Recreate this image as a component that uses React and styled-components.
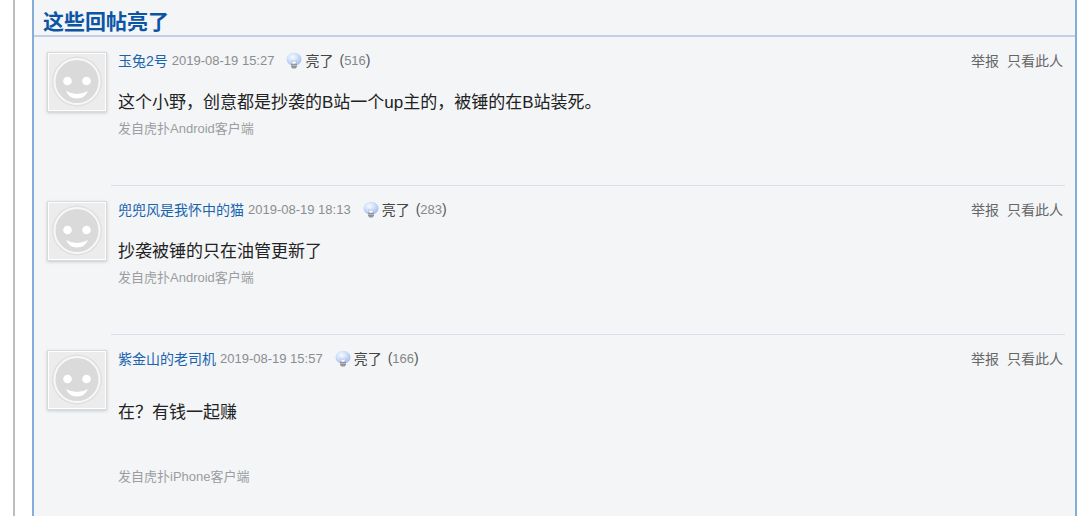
import React from "react";
import styled, { createGlobalStyle } from "styled-components";

const replies = [
  {
    id: 1,
    user: "玉兔2号",
    time: "2019-08-19 15:27",
    lights: 516,
    text: "这个小野，创意都是抄袭的B站一个up主的，被锤的在B站装死。",
    source: "发自虎扑Android客户端",
  },
  {
    id: 2,
    user: "兜兜风是我怀中的猫",
    time: "2019-08-19 18:13",
    lights: 283,
    text: "抄袭被锤的只在油管更新了",
    source: "发自虎扑Android客户端",
  },
  {
    id: 3,
    user: "紫金山的老司机",
    time: "2019-08-19 15:57",
    lights: 166,
    text: "在？有钱一起赚",
    source: "发自虎扑iPhone客户端",
    spaced: true,
  },
];

const GlobalStyle = createGlobalStyle`
  * {
    box-sizing: border-box;
  }
  body {
    margin: 0;
    background: #fff;
    color: #222;
    font-family: "Liberation Sans", "Noto Sans CJK SC", sans-serif;
  }
`;

const Page = styled.div`
  display: flex;
  min-height: 100vh;
  margin-left: 13px;
  padding: 0 3px 0 17px;
  border-left: 2px solid #bcbdbf;
`;

const Panel = styled.section`
  flex: 1;
  min-width: 0;
  background: #f3f5f7;
  border: solid #84add9;
  border-width: 0 2px;
`;

const Title = styled.h2`
  margin: 0;
  padding: 8px 9px 0;
  border-bottom: 2px solid #c3cfe4;
  color: #0b55a4;
  font-size: 21px;
  line-height: 27px;
`;

const Post = styled.article`
  display: flex;
  padding: 0 10px 0 13px;
`;

const Avatar = styled.a`
  flex: 0 0 60px;
  height: 60px;
  margin: 15px 4px 0 0;
  padding: 1px;
  background: #fff;
  border: 1px solid #d9dadc;
  box-shadow: 0 1px 3px rgba(0, 0, 0, 0.18);
  svg {
    display: block;
    width: 100%;
    height: 100%;
  }
`;

const PostBody = styled.div`
  flex: 1;
  min-width: 0;
  min-height: 149px;
  padding: 13px 0 0 7px;
  border-bottom: 1px solid #d8deea;
  ${Post}:last-child & {
    border-bottom: 0;
  }
`;

const Meta = styled.div`
  display: flex;
  align-items: center;
  font-size: 14px;
  line-height: 20px;
`;

const UserLink = styled.a`
  margin-right: 4px;
  color: #1a64ae;
  text-decoration: none;
`;

const Time = styled.time`
  margin-right: 12px;
  color: #8b8d90;
  font-size: 13px;
`;

const LightButton = styled.button`
  display: flex;
  align-items: center;
  padding: 0;
  border: 0;
  background: none;
  color: #444;
  font: inherit;
  cursor: pointer;
  svg {
    width: 16px;
    height: 18px;
    margin-right: 3px;
  }
`;

const Count = styled.span`
  margin-left: 6px;
  color: #555;
  span {
    color: #858789;
    font-size: 13px;
  }
`;

const Actions = styled.div`
  display: flex;
  gap: 8px;
  margin-left: auto;
  padding-right: 2px;
  a {
    color: #666;
    text-decoration: none;
  }
`;

const Text = styled.p`
  margin: ${(props) => (props.$spaced ? "30px 0 38px" : "18px 0 0")};
  font-size: 17px;
  line-height: 28px;
`;

const Source = styled.small`
  display: block;
  color: #9c9da0;
  font-size: 13px;
  line-height: 24px;
`;

function Smiley() {
  return (
    <svg viewBox="0 0 56 56" aria-hidden="true">
      <rect width="56" height="56" fill="#ececec" />
      <circle cx="28" cy="27.5" r="25" fill="#e0e0e0" />
      <circle cx="28" cy="27.5" r="22.5" fill="#dadada" stroke="#f8f8f8" strokeWidth="2" />
      <circle cx="18.5" cy="27" r="4.3" fill="#fff" />
      <circle cx="37.5" cy="27" r="4.3" fill="#fff" />
      <path d="M17 37Q28 43 39 37Q36 44.5 28 44.5Q20 44.5 17 37Z" fill="#fff" />
    </svg>
  );
}

function Bulb() {
  return (
    <svg viewBox="0 0 16 18" aria-hidden="true">
      <defs>
        <radialGradient id="glass" cx="0.4" cy="0.35" r="0.65">
          <stop offset="0" stopColor="#f5faff" />
          <stop offset="0.5" stopColor="#d3e2fa" />
          <stop offset="1" stopColor="#a9c1f0" />
        </radialGradient>
      </defs>
      <path
        d="M8 0.8C3.8 0.8 0.6 3.6 0.6 7.4C0.6 10.3 2.6 11.8 5 13.2H11C13.4 11.8 15.4 10.3 15.4 7.4C15.4 3.6 12.2 0.8 8 0.8Z"
        fill="url(#glass)"
      />
      <path d="M6.5 12.5L5.4 8.5L8 9.5L10.6 8.5L9.5 12.5" fill="#fff" stroke="#a9b9d8" strokeWidth="0.7" />
      <path d="M5 11.8H11V14.8L9.6 16.4H6.4L5 14.8Z" fill="#8f949f" />
      <path d="M5 13.4H11" stroke="#c0c5ce" strokeWidth="0.8" />
    </svg>
  );
}

function Reply({ reply }) {
  return (
    <Post>
      <Avatar href="#" aria-label={reply.user}>
        <Smiley />
      </Avatar>
      <PostBody>
        <Meta>
          <UserLink href="#">{reply.user}</UserLink>
          <Time>{reply.time}</Time>
          <LightButton type="button">
            <Bulb />
            亮了
            <Count>
              (<span>{reply.lights}</span>)
            </Count>
          </LightButton>
          <Actions>
            <a href="#">举报</a>
            <a href="#">只看此人</a>
          </Actions>
        </Meta>
        <Text $spaced={reply.spaced}>{reply.text}</Text>
        <Source>{reply.source}</Source>
      </PostBody>
    </Post>
  );
}

export default function App() {
  return (
    <>
      <GlobalStyle />
      <Page>
        <Panel>
          <Title>这些回帖亮了</Title>
          {replies.map((reply) => (
            <Reply key={reply.id} reply={reply} />
          ))}
        </Panel>
      </Page>
    </>
  );
}
